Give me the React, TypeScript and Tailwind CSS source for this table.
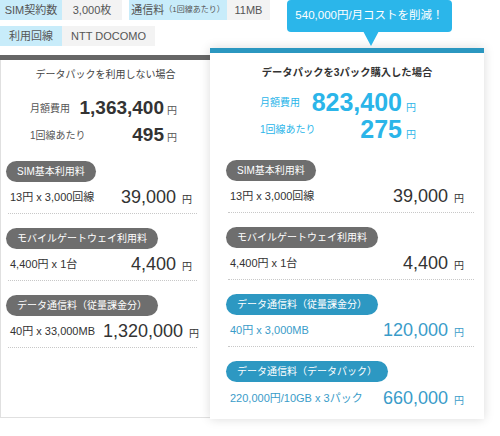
import React from 'react'

type Item = {
  pill: string
  label: string
  value: string
  blue?: boolean
  last?: boolean
}

const leftItems: Item[] = [
  { pill: 'SIM基本利用料', label: '13円 x 3,000回線', value: '39,000' },
  { pill: 'モバイルゲートウェイ利用料', label: '4,400円 x 1台', value: '4,400' },
  { pill: 'データ通信料（従量課金分）', label: '40円 x 33,000MB', value: '1,320,000' },
]

const rightItems: Item[] = [
  { pill: 'SIM基本利用料', label: '13円 x 3,000回線', value: '39,000' },
  { pill: 'モバイルゲートウェイ利用料', label: '4,400円 x 1台', value: '4,400' },
  { pill: 'データ通信料（従量課金分）', label: '40円 x 3,000MB', value: '120,000', blue: true },
  {
    pill: 'データ通信料（データパック）',
    label: '220,000円/10GB x 3パック',
    value: '660,000',
    blue: true,
    last: true,
  },
]

function Section({ item, right }: { item: Item; right?: boolean }) {
  return (
    <div className="flex flex-col items-start">
      <div
        className={
          'h-[21px] px-[11px] rounded-full flex items-center text-[10px] text-white whitespace-nowrap ' +
          (item.blue ? 'bg-[#2d98c2]' : 'bg-[#6e6e6e]')
        }
      >
        {item.pill}
      </div>
      <div
        className={
          'self-stretch ml-[2px] h-[32px] flex items-center justify-between whitespace-nowrap pl-[2px] ' +
          (right ? 'pr-[10px] ' : 'pr-[5px] ') +
          (item.last ? '' : 'border-b border-dotted border-[#c8c8c8]')
        }
      >
        <span className={'text-[11px] ' + (item.blue ? 'text-[#3a9cc9]' : 'text-[#333]')}>
          {item.label}
        </span>
        <span className={'flex items-baseline ml-[8px] ' + (item.blue ? 'text-[#3a9cc9]' : 'text-[#333]')}>
          <span className="text-[18px] leading-none">{item.value}</span>
          <span className="text-[10px] ml-[6px]">円</span>
        </span>
      </div>
    </div>
  )
}

function Tag({ label, value, labelW, valueW }: { label: React.ReactNode; value: string; labelW: string; valueW: string }) {
  return (
    <div className="flex h-[20px] text-[11px] text-[#555]">
      <div className={'bg-[#c8ecfa] flex items-center justify-center whitespace-nowrap ' + labelW}>{label}</div>
      <div className={'bg-[#f3f3f3] flex items-center justify-center whitespace-nowrap ' + valueW}>{value}</div>
    </div>
  )
}

export default function App() {
  return (
    <div className="relative w-[500px] h-[436px] bg-white overflow-hidden font-['Liberation_Sans','Noto_Sans_CJK_JP',sans-serif]">
      {/* Conditions */}
      <div className="flex flex-col gap-[6px]">
        <div className="flex gap-[7px]">
          <Tag label="SIM契約数" value="3,000枚" labelW="w-[62px]" valueW="w-[60px]" />
          <Tag
            label={
              <>
                通信料<span className="text-[8px]">（1回線あたり）</span>
              </>
            }
            value="11MB"
            labelW="w-[98px]"
            valueW="w-[43px]"
          />
        </div>
        <Tag label="利用回線" value="NTT DOCOMO" labelW="w-[62px]" valueW="w-[93px]" />
      </div>

      {/* Callout */}
      <div className="absolute left-[287px] top-0 w-[165px] h-[32px] rounded-[4px] bg-[#2bb6ea] flex items-center justify-center text-white text-[11.5px] z-20">
        540,000円/月コストを削減！
        <div className="absolute left-[76px] top-[31px] w-0 h-0 border-l-[8px] border-r-[8px] border-t-[15px] border-l-transparent border-r-transparent border-t-[#2bb6ea]" />
      </div>

      {/* Cards */}
      <div className="flex mt-[2px]">
        <div className="w-[210px] h-[363px] mt-[7px] border-l border-b border-[#e0e0e0] bg-white flex flex-col">
          <div className="h-[5px] bg-[#666] -ml-px" />
          <div className="mt-[8px] text-center text-[10px] leading-[14px] text-[#444]">データパックを利用しない場合</div>
          <div className="ml-[29px] w-[147px] mt-[14px] text-[#555]">
            <div className="h-[24px] flex items-center justify-between">
              <span className="text-[10px]">月額費用</span>
              <span className="flex items-baseline">
                <span className="text-[19px] font-bold text-[#333] leading-none">1,363,400</span>
                <span className="text-[10px] ml-[3px]">円</span>
              </span>
            </div>
            <div className="h-[24px] mt-[3px] flex items-center justify-between">
              <span className="text-[10px]">1回線あたり</span>
              <span className="flex items-baseline">
                <span className="text-[19px] font-bold text-[#333] leading-none">495</span>
                <span className="text-[10px] ml-[3px]">円</span>
              </span>
            </div>
          </div>
          <div className="mt-[14px] pl-[5px] pr-[13px] flex flex-col gap-[14px]">
            {leftItems.map((item) => (
              <Section key={item.pill} item={item} />
            ))}
          </div>
        </div>

        <div className="relative z-10 w-[274px] h-[371px] bg-white shadow-[0_0_10px_rgba(0,0,0,0.15)] flex flex-col">
          <div className="h-[5px] bg-[#2b97c0]" />
          <div className="mt-[13px] text-center text-[10.3px] leading-[14px] font-bold text-[#333]">
            データパックを3パック購入した場合
          </div>
          <div className="ml-[50px] w-[156px] mt-[9px] text-[#2bb5e9]">
            <div className="h-[27px] flex items-center justify-between">
              <span className="text-[10px]">月額費用</span>
              <span className="flex items-baseline">
                <span className="text-[25px] font-bold leading-none">823,400</span>
                <span className="text-[10px] ml-[4px]">円</span>
              </span>
            </div>
            <div className="h-[27px] flex items-center justify-between">
              <span className="text-[10px]">1回線あたり</span>
              <span className="flex items-baseline">
                <span className="text-[25px] font-bold leading-none">275</span>
                <span className="text-[10px] ml-[4px]">円</span>
              </span>
            </div>
          </div>
          <div className="mt-[17px] pl-[16px] pr-[10px] flex flex-col gap-[14px]">
            {rightItems.map((item) => (
              <Section key={item.pill} item={item} right />
            ))}
          </div>
        </div>
      </div>
    </div>
  )
}
